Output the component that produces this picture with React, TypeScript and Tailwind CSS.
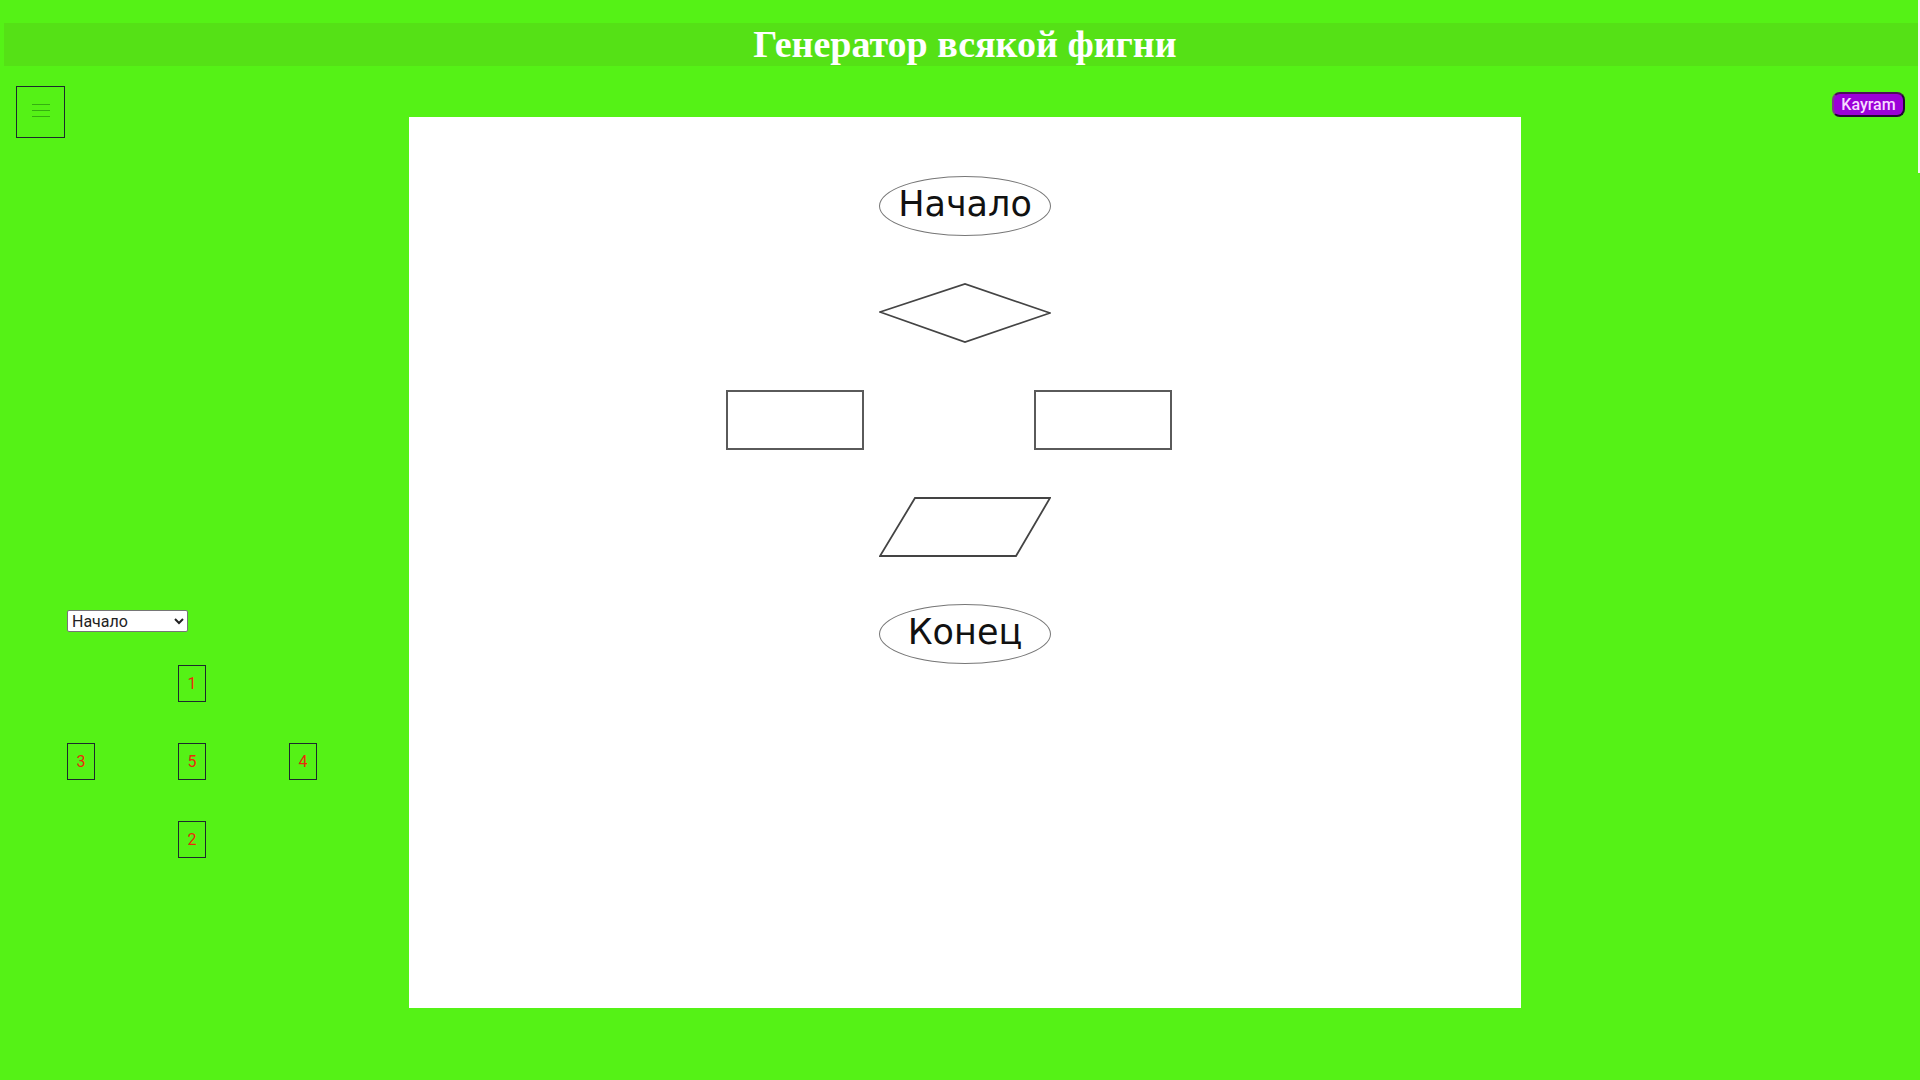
import type { ReactNode } from "react";

const blockTypes = ["Начало", "Условие", "Процесс", "Ввод/вывод", "Конец"];

const padButtons = [
  { label: "1", place: "col-start-2 row-start-1" },
  { label: "3", place: "col-start-1 row-start-2" },
  { label: "5", place: "col-start-2 row-start-2" },
  { label: "4", place: "col-start-3 row-start-2" },
  { label: "2", place: "col-start-2 row-start-3" },
];

function Terminal({ children }: { children: ReactNode }) {
  return (
    <div className="flex h-[60px] w-[172px] items-center justify-center rounded-[50%] border border-[#777] pb-1 font-['DejaVu_Sans',sans-serif] text-[35px] leading-none text-[#111]">
      {children}
    </div>
  );
}

function Outline({ points }: { points: string }) {
  return (
    <svg width="172" height="60" viewBox="0 0 172 60" fill="none" stroke="#444" strokeWidth="1.8" aria-hidden="true">
      <polygon points={points} />
    </svg>
  );
}

function Process() {
  return <div className="h-[60px] w-[138px] border-2 border-[#5a5a5a]" />;
}

export default function App() {
  return (
    <div className="relative min-h-screen bg-[#55f216] pt-[23px] pb-[72px] font-[Roboto,sans-serif]">
      <div className="absolute top-0 right-0 h-[173px] w-0.5 bg-[#f4f4f4]" />

      <header className="ml-1 bg-[#55e116] pl-1.5 text-center">
        <h1 className="font-['Liberation_Serif',serif] text-[38px] leading-[43px] font-bold text-white">
          Генератор всякой фигни
        </h1>
      </header>

      <div className="grid grid-cols-[409px_1fr_399px]">
        <aside className="pt-5 pl-4">
          <button
            type="button"
            aria-label="Меню"
            className="flex h-[52px] w-[49px] items-center justify-center border border-[#1c2a2c] pb-1"
          >
            <svg width="18" height="14" viewBox="0 0 18 14" stroke="#35b010" strokeWidth="1" aria-hidden="true">
              <path d="M0 1.5h18M0 7.5h18M0 13.5h18" />
            </svg>
          </button>

          <div className="mt-[472px] pl-[51px]">
            <select
              aria-label="Тип блока"
              className="block h-[22px] w-[121px] rounded-xs border border-[#767676] bg-white text-base leading-5 text-[#222]"
            >
              {blockTypes.map((type) => (
                <option key={type}>{type}</option>
              ))}
            </select>

            <div className="mt-[33px] grid grid-cols-[28px_28px_28px] gap-x-[83px] gap-y-[41px]">
              {padButtons.map(({ label, place }) => (
                <button
                  key={label}
                  type="button"
                  className={`h-[37px] border border-[#1c2a2c] text-base text-[#ea2a0c] ${place}`}
                >
                  {label}
                </button>
              ))}
            </div>
          </div>
        </aside>

        <main className="mt-[51px] flex min-h-[891px] flex-col items-center gap-[47px] bg-white pt-[59px]">
          <Terminal>Начало</Terminal>
          <Outline points="1,29 86,1 171,30 86,59" />
          <div className="flex gap-[170px] pr-[33px]">
            <Process />
            <Process />
          </div>
          <Outline points="36,1 171,1 137,59 1,59" />
          <Terminal>Конец</Terminal>
        </main>

        <div className="flex items-start justify-end pt-[26px] pr-[15px]">
          <button
            type="button"
            className="h-[25px] w-[73px] rounded-lg border-2 border-t-[#4b0e5a] border-r-[#210733] border-b-[#210733] border-l-[#7d3a8c] bg-[#9b00d8] text-base leading-5 font-medium text-[#f6dcff]"
          >
            Kayram
          </button>
        </div>
      </div>
    </div>
  );
}
